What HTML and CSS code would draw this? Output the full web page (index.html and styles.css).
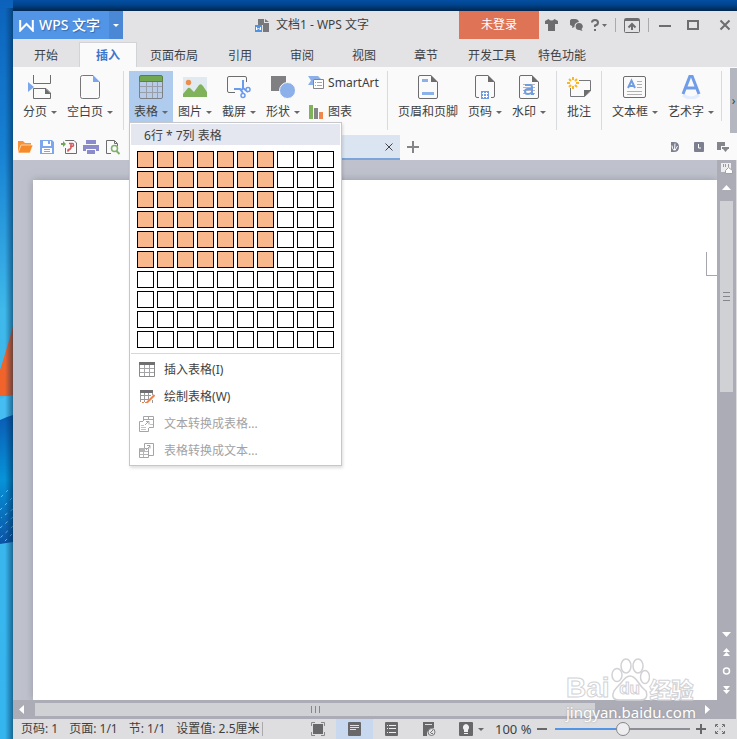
FILE: index.html
```html
<!DOCTYPE html>
<html lang="zh-CN">
<head>
<meta charset="utf-8">
<title>文档1 - WPS 文字</title>
<link rel="stylesheet" href="styles.css">
</head>
<body>
<svg class="wallpaper" width="13" height="739" viewBox="0 0 13 739" preserveAspectRatio="none" aria-hidden="true">
  <defs>
    <linearGradient id="sky" x1="0" y1="0" x2="0" y2="1"><stop offset="0" stop-color="#0c62bb"/><stop offset=".2" stop-color="#1680d2"/><stop offset=".42" stop-color="#3fb8ea"/><stop offset="1" stop-color="#35b5ef"/></linearGradient>
    <linearGradient id="wave" x1="0" y1="0" x2="0" y2="1"><stop offset="0" stop-color="#0a5bb4"/><stop offset=".5" stop-color="#0793d8"/><stop offset="1" stop-color="#0b53a5"/></linearGradient>
    <linearGradient id="edge"><stop offset="0" stop-color="#003060" stop-opacity="0"/><stop offset="1" stop-color="#002848" stop-opacity=".55"/></linearGradient>
  </defs>
  <path fill="url(#sky)" d="M0 0h13v739H0z"/>
  <path fill="#f0642c" d="M0 370Q8 345 13 326v70H0z"/>
  <path fill="#45bdf2" d="M0 399q6-3 13-4v26H0z"/>
  <path fill="url(#wave)" d="M0 420q6-3 13-5v127l-13 2z"/>
  <path fill="none" stroke="#a9dcf4" stroke-opacity=".7" stroke-dasharray="3 4" d="M8 490l-8 8M12 498L0 510M13 509L1 518M13 517L0 528M13 526L0 538M12 534l-8 8"/>
  <path fill="url(#edge)" d="M5 8h8v731H5z"/>
</svg>
<main class="window">
  <header class="titlebar">
    <button class="app-menu"><svg width="15" height="13" viewBox="0 0 15 13"><path d="M1.200 1v10.500L7.500 5l6.300 6.500V1" fill="none" stroke="#fff" stroke-width="2"/></svg><span>WPS 文字</span><span class="app-drop"><i class="arrow"></i></span></button>
    <h1 class="doc-title"><svg width="15" height="15" viewBox="0 0 15 15"><path fill="#77787b" d="M3 1h6v4h5v9H8V7H3zM10 1l4 3h-4z"/><path fill="#4f93e3" d="M0 7h7v7H0z"/><path d="M1.500 9v3l2-2 2 2V9" fill="none" stroke="#fff"/></svg><span>文档1 - WPS 文字</span></h1>
    <button class="login">未登录</button>
    <div class="title-tools">
      <button aria-label="皮肤"><svg width="13" height="12" viewBox="0 0 13 12" fill="#6d6d70"><path d="M3.500 0Q6.500 3 9.500 0L13 2v3h-3v7H3V5H0V2z"/></svg></button>
      <button aria-label="反馈"><svg width="13" height="12" viewBox="0 0 13 12" fill="#6d6d70"><path d="M5 0a4.500 4 0 0 1 4 3Q4 4 4.500 8L2 9l.3-2A4 3.500 0 0 1 5 0z"/><path d="M9 4a3.600 3.400 0 0 1 2.500 6l1 2-3-1A3.600 3.500 0 1 1 9 4z"/></svg></button>
      <button class="help" aria-label="帮助"><svg width="16" height="12" viewBox="0 0 16 12"><path d="M1 3.500Q1 1 4 1t3 2.500T4 6.500V8" fill="none" stroke="#6d6d70" stroke-width="2"/><path fill="#6d6d70" d="M3 10h2v2H3zM11 5h5l-2.500 3z"/></svg></button>
      <i class="bar"></i>
      <button aria-label="收起功能区"><svg width="16" height="15" viewBox="0 0 16 15"><rect x=".5" y=".5" width="15" height="14" rx="1" fill="none" stroke="#6d6d70"/><path d="M1 2h14M8 12V7M4.500 9.500L8 6l3.500 3.500" fill="none" stroke="#6d6d70" stroke-width="2"/></svg></button>
      <i class="bar"></i>
    </div>
    <div class="win-tools">
      <button aria-label="最小化"><svg width="12" height="12" viewBox="0 0 12 12"><path d="M0 7h12" stroke="#6d6d70" stroke-width="2"/></svg></button>
      <button aria-label="最大化"><svg width="12" height="12" viewBox="0 0 12 12"><path d="M1 2h10v8H1z" fill="none" stroke="#6d6d70" stroke-width="2"/></svg></button>
      <button aria-label="关闭"><svg width="12" height="12" viewBox="0 0 12 12"><path d="M1.500 1.500l9 9m0-9l-9 9" stroke="#6d6d70" stroke-width="2"/></svg></button>
    </div>
  </header>
  <nav class="tabs">
    <button>开始</button><button class="active">插入</button><button>页面布局</button><button>引用</button><button>审阅</button><button>视图</button><button>章节</button><button>开发工具</button><button>特色功能</button>
  </nav>
  <section class="ribbon">
    <div class="group">
      <button class="tool"><svg width="24" height="24" viewBox="0 0 24 24"><path fill="none" stroke="#6d6d70" d="M5.500 0v8.500h17V0M22.500 18v5.500h-17v-10H18l4.500 4.500"/><path fill="#6d6d70" d="M17 13l6 6h-6z"/><path fill="#7aa6ee" d="M0 7l6 5-6 5z"/></svg><span>分页<i class="arrow"></i></span></button>
      <button class="tool"><svg width="20" height="24" viewBox="0 0 20 24"><path fill="none" stroke="#77777a" d="M13 .5H2.500a2 2 0 0 0-2 2v19a2 2 0 0 0 2 2h15a2 2 0 0 0 2-2V7"/><path fill="#7aa6ee" d="M13 0l7 7h-7z"/></svg><span>空白页<i class="arrow"></i></span></button>
    </div>
    <div class="group">
      <div class="table-tool">
        <button class="tool open" aria-expanded="true"><svg width="24" height="24" viewBox="0 0 24 24"><path fill="#b8cce9" stroke="#7c8087" d="M.5 6.500h23V22q0 1.500-1.500 1.500H2Q.5 23.500.5 22z"/><path fill="#70a750" stroke="#5c803f" d="M.5 6.500V2Q.5.500 2 .5h20q1.500 0 1.500 1.500v4.500z"/><path stroke="#999fa8" d="M1 11.500h22M1 17.500h22M7.500 7v16M13.500 7v16M18.500 7v16"/></svg><span>表格<i class="arrow"></i></span></button>
        <div class="menu">
          <h2>6行 * 7列 表格</h2>
          <div class="size-grid" id="size-grid"></div>
          <div class="menu-items">
            <button><svg width="16" height="16" viewBox="0 0 16 16"><path fill="#fff" stroke="#8a8a8d" d="M.5 .5h15v14H.5z"/><path stroke="#a5a5a8" d="M5.500 3v11M10.500 3v11M1 6.500h14M1 10.500h14"/><path fill="#707073" d="M0 0h16v3H0z"/></svg>插入表格(I)</button>
            <button><svg width="16" height="16" viewBox="0 0 16 16"><path fill="none" stroke="#9a9a9d" d="M1.500 2v11M5.500 4v9M9.500 4v7M13.500 4v2M2 6.500h10M2 10.500h8M13.500 11v3"/><path fill="#707073" d="M1 1h13v3H1z"/><path stroke="#ef8247" stroke-width="2" d="M8 13.500l7.500-7.500"/><path stroke="#ef8247" d="M3 13.500h6" stroke-dasharray="2 1"/></svg>绘制表格(W)</button>
            <button disabled><svg width="16" height="16" viewBox="0 0 16 16"><path fill="none" stroke="#a5a5a8" d="M4.500 5V.5h10v11H10M5 3.500h9M9.500 1v2M4 5.500H.5v10h9V12"/><path fill="none" stroke="#c3c3c6" d="M2 9.500h3M2 11.500h5M2 13.500h5M11 8.500h3"/><path fill="none" stroke="#a5a5a8" d="M6 9l4-4M7 5.500h3v3"/></svg>文本转换成表格...</button>
            <button disabled><svg width="16" height="16" viewBox="0 0 16 16"><path fill="none" stroke="#a5a5a8" d="M5.500 5V.5h9v12H10M.5 5.500h9v9h-9z"/><path fill="none" stroke="#b5b5b8" d="M1 8.500h8M1 11.500h8M4.500 6v8"/><path fill="none" stroke="#a5a5a8" d="M7 7l4-4M8 2.500h3v3"/><path fill="#b5b5b8" d="M1 5h5v3H1z"/></svg>表格转换成文本...</button>
          </div>
        </div>
      </div>
      <button class="tool"><svg width="24" height="24" viewBox="0 0 24 24"><path fill="#e1eaf1" d="M0 2h24v20H0z"/><circle cx="5.500" cy="7.500" r="2.700" fill="#f08c49"/><path fill="#80b15b" d="M0 22v-3l5-6q1.500-1 3 1l3 3 5-7q2-2 4 1l4 6v5z"/></svg><span>图片<i class="arrow"></i></span></button>
      <button class="tool"><svg width="24" height="24" viewBox="0 0 24 24"><path fill="none" stroke="#6d6d70" d="M8 17.500H2Q.5 17.500.5 16V3Q.5 1.500 2 1.500h16q1.500 0 1.500 1.500v4"/><path fill="none" stroke="#6b9beb" stroke-width="2" d="M16 5v8l5 4M7 14h6l3 4M16 13l-2 3"/><circle cx="21" cy="14.500" r="2" fill="#fff" stroke="#6b9beb" stroke-width="1.500"/><circle cx="16" cy="20.500" r="2" fill="#fff" stroke="#6b9beb" stroke-width="1.500"/></svg><span>截屏<i class="arrow"></i></span></button>
      <button class="tool"><svg width="24" height="24" viewBox="0 0 24 24"><path fill="#808082" d="M0 1h15v15H0z"/><circle cx="16.500" cy="15.500" r="8" fill="#8bb0ea" stroke="#fafafb"/></svg><span>形状<i class="arrow"></i></span></button>
      <div class="stack">
        <button><svg width="16" height="16" viewBox="0 0 16 16"><path fill="#8bb0ea" d="M0 1h10l3 3H5v6H0l3-4.500z"/><path fill="#fff" stroke="#858588" d="M5.500 4.500h10v9h-10z"/><path stroke="#a5a5a8" d="M7 7.500h1M9 7.500h5M7 10.500h1M9 10.500h5"/></svg>SmartArt</button>
        <button><svg width="16" height="16" viewBox="0 0 16 16"><path fill="#80b15b" d="M1 1h4v14H1z"/><path fill="#858588" d="M6 4h4v11H6z"/><path fill="#ee884c" d="M11 8h4v7h-4z"/></svg>图表</button>
      </div>
    </div>
    <div class="group">
      <button class="tool"><svg width="20" height="24" viewBox="0 0 20 24"><path fill="none" stroke="#6d6d70" d="M13 .5H2Q.5.500.5 2v20q0 1.500 1.500 1.500h16q1.500 0 1.500-1.500V7"/><path fill="#6d6d70" d="M13 0l7 7h-7z"/><path fill="#8bb0ea" d="M4 4h6v3H4zM4 17h12v3H4z"/></svg><span>页眉和页脚</span></button>
      <button class="tool"><svg width="20" height="24" viewBox="0 0 20 24"><path fill="none" stroke="#6d6d70" d="M13 .5H2Q.5.500.5 2v19q0 1.500 1.500 1.500h2M16 22.500h2q1.500 0 1.500-1.500V7"/><path fill="#6d6d70" d="M13 0l7 7h-7z"/><path fill="#719cdf" d="M6 16h8v8H6z"/><path stroke="#fff" d="M8.500 17v6M11.500 17v6M7 18.500h6M7 21.500h6"/></svg><span>页码<i class="arrow"></i></span></button>
      <button class="tool"><svg width="20" height="24" viewBox="0 0 20 24"><path fill="none" stroke="#6d6d70" d="M13 .5H2Q.5.500.5 2v20q0 1.500 1.500 1.500h16q1.500 0 1.500-1.500V7"/><path stroke="#b5b5b8" d="M4 9.500h12M4 12.500h12M4 15.500h12M4 18.500h12"/><path fill="#6d6d70" d="M13 0l7 7h-7z"/><path fill="none" stroke="#719cdf" stroke-width="2" d="M6 10h5q2 0 2 2v7h2M13 14H9q-3 0-3 2.500T9 19q2 0 4-1.500"/></svg><span>水印<i class="arrow"></i></span></button>
    </div>
    <div class="group">
      <button class="tool"><svg width="24" height="24" viewBox="0 0 24 24"><path fill="none" stroke="#77777a" d="M12 5.500h11.500V16l-6 5.500h-14V13"/><path fill="#6d6d70" d="M17 15h7l-7 7z"/><circle cx="6" cy="8" r="5" fill="#fafafb"/><path stroke="#f8b724" stroke-width="2" d="M6 2v3M6 11v3M0 8h3M9 8h3M2 4l2 2M8 10l2 2M10 4L8 6M4 10l-2 2"/></svg><span>批注</span></button>
    </div>
    <div class="group last">
      <button class="tool"><svg width="24" height="24" viewBox="0 0 24 24"><rect x=".5" y="1.500" width="22" height="21" rx="1.500" fill="none" stroke="#6d6d70"/><path fill="none" stroke="#719cdf" stroke-width="2" d="M5 13L8.500 5.500 12 13M6 11h5"/><path stroke="#b0b0b3" d="M14 6.500h5M14 9.500h5M14 12.500h5M4 16.500h15M4 19.500h15"/></svg><span>文本框<i class="arrow"></i></span></button>
      <button class="tool"><svg width="24" height="24" viewBox="0 0 24 24"><path fill="none" stroke="#e3edfd" stroke-width="3" d="M4 20q8 6 16 0"/><path fill="none" stroke="#719ce8" stroke-width="3" d="M4 19l7-18h2l7 18M6 13h12"/></svg><span>艺术字<i class="arrow"></i></span></button>
    </div>
    <button class="more" aria-label="更多">›</button>
  </section>
  <section class="docbar">
    <div class="quick">
      <button aria-label="打开"><svg width="16" height="16" viewBox="0 0 16 16"><path fill="#f79336" d="M1 2h5l2 2h6v3H4l-2 6H1z"/><path fill="#f58a2a" stroke="#fff" stroke-width=".6" d="M4 6h12l-3 8H1z"/></svg></button>
      <button aria-label="保存"><svg width="16" height="16" viewBox="0 0 16 16"><path fill="#7ca7ec" d="M1 1h12l2 2v12H1z"/><path fill="#fff" d="M4 2h8v5H4zM3 9h10v5H3z"/><path fill="#7ca7ec" d="M9 2h2v3H9zM5 10h6v1H5zM5 12h6v1H5z"/></svg></button>
      <button aria-label="输出为PDF"><svg width="16" height="16" viewBox="0 0 16 16"><path fill="none" stroke="#6d6d70" d="M4.500 2V1.500H13L15.500 4v10.500h-11V9"/><path fill="#70a750" d="M0 4h2V2l3 3-3 3V6H0z"/><path fill="none" stroke="#d75858" stroke-width="1.500" d="M8 4.500h3.500q1 0 1 1.500t-2 1.500H9M10 5v4l-3 3q-1-2 3-2"/></svg></button>
      <button aria-label="打印"><svg width="16" height="16" viewBox="0 0 16 16"><path fill="#8b8acb" d="M3 1h10v4H3zM0 6h16v6h-3v-2H3v2H0zM4 11h8v4H4z"/></svg></button>
      <button aria-label="打印预览"><svg width="16" height="16" viewBox="0 0 16 16"><path fill="none" stroke="#6d6d70" d="M6 14.500H1.500V1.500h8l3 3V7M9.500 2v2.500H12"/><circle cx="9.500" cy="9.500" r="3" fill="none" stroke="#80b06a" stroke-width="1.500"/><path stroke="#80b06a" stroke-width="2" d="M11.500 12l3 3"/></svg></button>
    </div>
    <div class="doc-tab"><button aria-label="关闭文档"><svg width="8" height="8" viewBox="0 0 8 8"><path d="M.5.500l7 7m0-7l-7 7" stroke="#444"/></svg></button></div>
    <button class="new-tab" aria-label="新建"><svg width="12" height="12" viewBox="0 0 12 12"><path d="M6 0v12M0 6h12" stroke="#858588" stroke-width="2"/></svg></button>
    <div class="panel-tools">
      <button aria-label="文档助手"><svg width="12" height="12" viewBox="0 0 12 12"><path fill="#7b7f8f" d="M2 1h3q5 0 5 5t-5 5H2z"/><path d="M3 4.500q0 3 2 5M6 2.500L5.500 9M8.500 5L6 9.500" stroke="#fff" fill="none"/></svg></button>
      <button aria-label="历史"><svg width="12" height="12" viewBox="0 0 12 12"><rect x="1" y="1" width="10" height="10" rx="1" fill="#7b7f8f"/><path d="M5.500 3v4H8" stroke="#fff" fill="none"/></svg></button>
      <button aria-label="窗口列表"><svg width="12" height="12" viewBox="0 0 12 12"><path fill="#85868c" d="M0 1h8v4H4v4H0zM5 6h7v2h-1L8.500 11 6 8H5z"/></svg></button>
    </div>
  </section>
  <section class="workspace">
    <div class="canvas"><article class="page" contenteditable="true" aria-label="文档"><i class="corner"></i></article></div>
    <div class="vscroll">
      <svg width="12" height="12" viewBox="0 0 12 12"><path fill="#ededf0" d="M0 1h10v9H0z"/><path stroke="#9999a2" d="M2.500 2v3M4.500 2v3M7.500 2v3"/><path fill="#fff" stroke="#a0a0a8" d="M4.500 8.500l3-3 4 3v3h-7z"/></svg>
      <svg class="up" width="9" height="5" viewBox="0 0 9 5"><path fill="#fff" d="M4.500 0L9 5H0z"/></svg>
      <div class="vtrack"><div class="vthumb"><i></i><i></i><i></i></div></div>
      <svg width="9" height="5" viewBox="0 0 9 5"><path fill="#fff" d="M0 0h9L4.500 5z"/></svg>
      <svg width="9" height="8" viewBox="0 0 9 8"><path fill="#fff" d="M4.500 0L8 4H1zM4.500 4L8 8H1z"/></svg>
      <svg width="9" height="8" viewBox="0 0 9 8"><circle cx="4.500" cy="4" r="3" fill="none" stroke="#fff" stroke-width="1.500"/></svg>
      <svg width="9" height="8" viewBox="0 0 9 8"><path fill="#fff" d="M1 0h7L4.500 4zM1 4h7L4.500 8z"/></svg>
    </div>
    <div class="hscroll">
      <svg width="5" height="10" viewBox="0 0 5 10"><path fill="#fff" d="M5 0v9L0 4.500z"/></svg>
      <div class="htrack"><div class="hthumb"><i></i><i></i><i></i></div></div>
      <svg width="5" height="10" viewBox="0 0 5 10"><path fill="#fff" d="M0 0l5 4.500L0 9z"/></svg>
    </div>
    <div class="watermark">
      <div class="brand"><b>Bai</b><span class="paw"><svg width="40" height="44" viewBox="0 0 40 44"><g fill="#fff" stroke="#d2d2d5" stroke-width="1.500"><ellipse cx="7" cy="17" rx="5" ry="6.500"/><ellipse cx="16" cy="8" rx="5" ry="7"/><ellipse cx="28" cy="8" rx="5" ry="7"/><ellipse cx="35" cy="19" rx="4.500" ry="6.500"/><path d="M20 18q4 0 8 6t8 9q3 9-6 9H10q-10 0-6-9 2-3 7-8 5-7 9-7z"/></g></svg><b>du</b></span><b class="cn">经验</b></div>
      <div class="site">jingyan.baidu.com</div>
    </div>
  </section>
  <footer class="status">
    <div class="facts"><span>页码: 1</span><span>页面: 1/1</span><span>节: 1/1</span><span>设置值: 2.5厘米</span><i class="bar"></i></div>
    <div class="views">
      <button aria-label="适合窗口"><svg width="14" height="14" viewBox="0 0 14 14"><path fill="#68686b" d="M2 2h10v10H2z"/><path d="M.5 4V.5H4M10 .5h3.500V4M13.500 10v3.500H10M4 13.500H.5V10" fill="none" stroke="#88888b"/></svg></button>
      <button class="active" aria-label="页面视图"><svg width="14" height="14" viewBox="0 0 14 14"><rect width="13" height="14" rx="1" fill="#68686b"/><path d="M2 3.500h9M2 5.500h9M2 7.500h6" stroke="#d8e2f0"/></svg></button>
      <button aria-label="大纲"><svg width="14" height="14" viewBox="0 0 14 14"><rect width="13" height="14" rx="1" fill="#68686b"/><path d="M2 3.500h1M4 3.500h7M2 6.500h1M4 6.500h7M2 10.500h1M4 10.500h7" stroke="#eee"/></svg></button>
      <button aria-label="网页视图"><svg width="14" height="14" viewBox="0 0 14 14"><path fill="#68686b" d="M1 0h11v6H9l-4 4v4H1z"/><path d="M3 2.500h7" stroke="#ddd"/><circle cx="9.500" cy="10" r="3.500" fill="#e4e4e6" stroke="#78787b"/><path d="M8 11l3-3M9 11.500h2" stroke="#78787b"/></svg></button>
      <button class="bulb" aria-label="护眼模式"><svg width="14" height="14" viewBox="0 0 14 14"><rect width="14" height="14" rx="1" fill="#68686b"/><path fill="#f0f0f2" d="M7 2a3.500 3.500 0 0 1 2 6v2H5V8a3.500 3.500 0 0 1 2-6zM5 11h4v1H5z"/></svg><i class="arrow"></i></button>
    </div>
    <label class="zoom-label" for="zoom">100 %</label>
    <button aria-label="缩小"><svg width="10" height="10" viewBox="0 0 10 10"><path d="M0 5h10" stroke="#68686b" stroke-width="2"/></svg></button>
    <input id="zoom" class="zoom" type="range" min="0" max="200" value="100">
    <button aria-label="放大"><svg width="10" height="10" viewBox="0 0 10 10"><path d="M0 5h10M5 0v10" stroke="#68686b" stroke-width="2"/></svg></button>
    <button class="full" aria-label="全屏"><svg width="10" height="10" viewBox="0 0 10 10"><path d="M.5 3V.5H3M7 .5h2.500V3M9.500 7v2.500H7M3 9.500H.5V7M1 1l2 2M9 1L7 3M9 9L7 7M1 9l2-2M4.500 5h1" fill="none" stroke="#707073"/></svg></button>
  </footer>
</main>
<script src="script.js"></script>
</body>
</html>
```
FILE: styles.css
```css
* { box-sizing: border-box; }
body {
  margin: 0;
  padding: 11px 0 0 13px;
  height: 100vh;
  overflow: hidden;
  background: linear-gradient(#0450a4, #00438c 5px, #00264f 11px, #1b7ccc 12px);
  font: 12px/16px "Noto Sans", "Noto Sans CJK SC", sans-serif;
  color: #3f3f42;
}
button { border: 0; padding: 0; margin: 0; background: none; font: inherit; color: inherit; white-space: nowrap; }
svg { display: block; flex: none; }
.wallpaper { position: absolute; left: 0; top: 0; height: 100%; }
.window { height: 100%; display: flex; flex-direction: column; background: #fafafb; }
.arrow { display: inline-block; border: 3px solid transparent; border-top-color: #68686b; border-bottom: 0; }

.titlebar { height: 28px; flex: none; display: flex; align-items: center; background: #e3e3e6; }
.app-menu { display: flex; align-items: center; height: 28px; padding-left: 6px; background: #5294e5; color: #fff; font-size: 14px; font-weight: 500; text-shadow: 1px 1px 1px #3568a8; }
.app-menu > span:first-of-type { margin-left: 5px; flex: none; width: 70px; text-align: left; }
.app-drop { width: 14px; align-self: stretch; display: grid; place-items: center; background: #4a88d6; }
.app-drop .arrow { border-top-color: #fff; }
.doc-title { flex: 1; margin: 0; display: flex; justify-content: center; align-items: center; gap: 6px; padding-left: 42px; font-size: 12px; line-height: 18px; font-weight: 400; }
.login { width: 80px; height: 28px; background: #df7356; color: #fff; }
.title-tools { display: flex; align-items: center; gap: 8px; padding-left: 6px; }
.title-tools button:nth-child(2) { margin-left: 4px; }
.bar { width: 1px; height: 14px; background: #aaaaad; }
.win-tools { display: flex; gap: 16px; padding: 0 6px 0 10px; }
.win-tools button:last-child { margin-left: 4px; }

.tabs { height: 28px; flex: none; display: flex; align-items: flex-end; padding-left: 2px; background: #e3e3e6; }
.tabs button { min-width: 62px; height: 25px; padding: 2px 11px 0; }
.tabs .active { min-width: 58px; margin: 0 2px; background: #fafafb; border: 1px solid #d2d3d7; border-bottom: 0; color: #3b77cc; font-weight: 600; }

.ribbon { display: flex; align-items: flex-start; flex: none; height: 68px; padding: 4px 0 0 5px; }
.group { display: flex; flex: none; height: 59px; padding-right: 5px; margin-right: 5px; border-right: 1px solid #d9dadd; }
.group.last { height: 50px; padding-right: 2px; }
.tool { height: 51px; padding: 4px 5px 0; display: flex; flex-direction: column; align-items: center; gap: 5px; }
.tool span { display: flex; align-items: center; gap: 4px; }
.tool.open { background: #afcbed; }
.stack { display: flex; flex-direction: column; gap: 13px; padding: 4px 3px 0; }
.stack button { display: flex; gap: 4px; align-items: center; }
.more { margin: -3px 0 0 auto; width: 7px; height: 65px; background: #b5b7c0; }

.table-tool { position: relative; }
.menu { position: absolute; z-index: 5; left: 0; top: 51px; width: 213px; padding: 1px 1px 0; background: #fff; border: 1px solid #c6c7cb; box-shadow: 1px 2px 3px #0002; }
.menu h2 { margin: 0; height: 21px; padding-left: 13px; background: #e4e7f0; font-size: 12px; line-height: 23px; font-weight: 400; }
.size-grid { display: grid; grid-template-columns: repeat(10, 17px); grid-auto-rows: 17px; gap: 3px; padding: 6px 6px 5px; }
.size-grid button { border: 1px solid #000; background: #fff; }
.size-grid .picked { background: #f9b88c; }
.menu-items { border-top: 1px solid #d7d7da; padding: 2px 0 1px; }
.menu-items button { display: flex; align-items: center; gap: 9px; width: 100%; height: 27px; padding-left: 8px; }
.menu-items button:disabled { color: #a2a2a5; }

.docbar { height: 25px; flex: none; display: flex; align-items: center; }
.quick { display: flex; gap: 6px; padding-left: 4px; width: 117px; }
.quick, .new-tab, .panel-tools { padding-bottom: 2px; }
.doc-tab { width: 270px; height: 25px; background: #dbe5f1; border-bottom: 2px solid #7ba4d9; display: flex; align-items: center; justify-content: flex-end; padding-right: 7px; }
.new-tab { margin-left: 7px; }
.panel-tools { margin-left: auto; display: flex; gap: 12px; padding-right: 8px; }

.workspace { position: relative; flex: 1; min-height: 0; display: grid; grid-template: minmax(0, 1fr) 19px / minmax(0, 1fr) 19px; background: #abacb6; border-right: 1px solid #dcdcdf; }
.canvas { padding: 20px 0 0 20px; background: #bfc2cc; overflow: hidden; }
.page { height: 100%; background: #fff; box-shadow: 0 0 8px #7c7e8c99; outline: 0; display: flex; justify-content: flex-end; padding-top: 72px; }
.corner { width: 11px; height: 24px; border: 1px solid #a6a7ad; border-width: 0 0 1px 1px; }
.vscroll { grid-row: 1 / 3; grid-column: 2; display: flex; flex-direction: column; align-items: center; gap: 11px; padding: 2px 0 25px; }
.vtrack { flex: 1; width: 13px; }
.vthumb { height: 191px; background: #d0d1d5; display: flex; flex-direction: column; align-items: center; justify-content: center; gap: 3px; }
.vthumb i { width: 7px; height: 1px; background: #85868d; }
.hscroll { grid-row: 2; grid-column: 1; display: flex; align-items: center; gap: 11px; padding: 0 7px 0 6px; }
.htrack { flex: 1; }
.hthumb { width: 85%; height: 13px; background: #d0d1d5; display: flex; align-items: center; justify-content: center; gap: 3px; }
.hthumb i { width: 1px; height: 7px; background: #85868d; }
.watermark { position: absolute; right: 38px; bottom: -3px; width: 132px; color: #fff; }
.brand { display: flex; align-items: flex-end; height: 44px; font: 700 28px/28px "Liberation Sans", sans-serif; -webkit-text-stroke: 1px #d2d2d5; }
.paw { position: relative; }
.paw b { position: absolute; inset: 21px 0 0; font-size: 17px; line-height: 20px; text-align: center; }
.brand .cn { font-size: 22px; font-family: "Noto Sans CJK SC", sans-serif; }
.site { font-size: 15px; line-height: 20px; text-shadow: 0 0 2px #999; }

.status { height: 20px; flex: none; display: flex; align-items: center; background: #dedee0; }
.facts { display: flex; gap: 11px; padding-left: 8px; width: 286px; white-space: nowrap; line-height: 22px; align-items: center; }
.facts .bar { margin-left: -9px; }
.views { display: flex; }
.views button { width: 37px; height: 20px; display: flex; align-items: center; justify-content: center; gap: 5px; }
.views .active { background: #c8d9ef; }
.views .bulb { width: 48px; }
.zoom-label { font-size: 13px; width: 42px; white-space: nowrap; line-height: 18px; }
.zoom { appearance: none; flex: 1; min-width: 80px; height: 16px; margin: 0 6px 0 8px; background: linear-gradient(90deg, #5294e5 50%, #8c8d95 50%) center / 100% 2px no-repeat; }
.zoom::-webkit-slider-thumb { appearance: none; width: 14px; height: 14px; border: 1px solid #85868a; border-radius: 50%; background: #eeeef0; }
.full { margin: 0 12px 0 9px; }
```
FILE: script.js
```js
// Fill the table size picker: 10 by 10 cells, with the chosen block highlighted.
const grid = document.getElementById("size-grid");
const chosen = { rows: 6, columns: 7 };
for (let row = 1; row <= 10; row++) {
  for (let column = 1; column <= 10; column++) {
    const cell = document.createElement("button");
    cell.setAttribute("aria-label", `${row}行 ${column}列`);
    if (row <= chosen.rows && column <= chosen.columns) cell.className = "picked";
    grid.append(cell);
  }
}
```
